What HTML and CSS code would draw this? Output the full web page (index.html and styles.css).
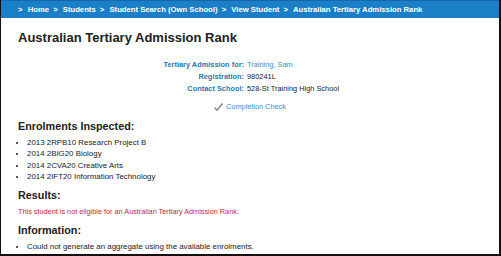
FILE: index.html
```html
<!DOCTYPE html>
<html lang="en">
<head>
<meta charset="UTF-8">
<title>Australian Tertiary Admission Rank</title>
<link rel="stylesheet" href="styles.css">
</head>
<body>
<div class="frame">
    <div class="crumbs">
        <span class="sep">&gt;</span> Home <span class="sep">&gt;</span> Students <span class="sep">&gt;</span> Student Search (Own School) <span class="sep">&gt;</span> View Student <span class="sep">&gt;</span> Australian Tertiary Admission Rank
    </div>
    <div class="content">
        <h1>Australian Tertiary Admission Rank</h1>

        <div class="details">
            <span class="label">Tertiary Admission for:</span><span class="value link">Training, Sam</span>
            <span class="label">Registration:</span><span class="value">980241L</span>
            <span class="label">Contact School:</span><span class="value">528-St Training High School</span>
        </div>

        <div class="check">
            <svg width="9" height="8" viewBox="0 0 9 8"><path d="M0.6 4.4 L3 7.2 L8.5 0.6" fill="none" stroke="#8c8c8c" stroke-width="1.5" stroke-linejoin="round"/></svg>
            <span class="link">Completion Check</span>
        </div>

        <h2>Enrolments Inspected:</h2>
        <ul>
            <li>2013 2RPB10 Research Project B</li>
            <li>2014 2BIG20 Biology</li>
            <li>2014 2CVA20 Creative Arts</li>
            <li>2014 2IFT20 Information Technology</li>
        </ul>

        <h2>Results:</h2>
        <p class="error">This student is not eligible for an Australian Tertiary Admission Rank.</p>

        <h2>Information:</h2>
        <ul>
            <li>Could not generate an aggregate using the available enrolments.</li>
        </ul>
    </div>
</div>
</body>
</html>
```

FILE: styles.css
```css
body {
    margin: 0;
    font-family: Arial, "Liberation Sans", sans-serif;
    color: #222;
}

.frame {
    width: 498px;
    height: 254px;
    border-left: 1px solid #111;
    border-right: 2px solid #111;
    border-bottom: 2px solid #111;
    overflow: hidden;
    background: #fff;
}

.crumbs {
    background-color: #1a7fc6;
    border-top: 1px solid #1668aa;
    color: #fff;
    font-size: 7.7px;
    font-weight: bold;
    height: 17px;
    line-height: 17px;
    padding-left: 15px;
    white-space: nowrap;
}

.sep {
    margin: 0 3px 0 2px;
}

.content {
    padding: 0 17px;
}

h1 {
    font-size: 13px;
    line-height: 16px;
    margin: 12px 0 13px;
}

.details {
    display: grid;
    grid-template-columns: 243px auto;
    column-gap: 3px;
    font-size: 7.4px;
    line-height: 12px;
    margin-left: -17px;
}

.label {
    text-align: right;
    color: #2a77b5;
    font-weight: bold;
}

.link {
    color: #3b8cce;
}

.check {
    display: flex;
    align-items: center;
    justify-content: center;
    gap: 3px;
    font-size: 7.3px;
    line-height: 12px;
    margin-top: 5.5px;
}

h2 {
    font-size: 10.8px;
    line-height: 14px;
    margin: 6.5px 0 3.5px;
}

ul {
    margin: 0;
    padding-left: 9px;
    font-size: 7.9px;
    line-height: 11.5px;
}

ul + h2 {
    margin-top: 5.5px;
}

.error {
    color: #c42a3c;
    font-size: 7.3px;
    line-height: 12px;
    margin: 4.3px 0 0;
}

.error + h2 {
    margin: 4.7px 0 4px;
}
```
